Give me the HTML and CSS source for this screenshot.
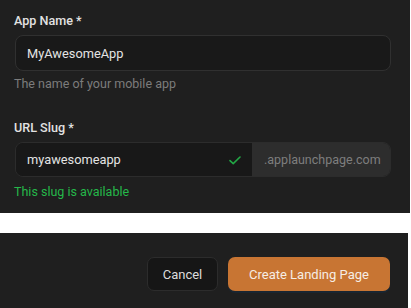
FILE: index.html
```html
<!DOCTYPE html>
<html>
<head>
<meta charset="utf-8">
<link rel="stylesheet" href="styles.css">
</head>
<body>
<div class="form">
  <div class="field">
    <label class="label">App Name *</label>
    <div class="input">MyAwesomeApp</div>
    <div class="hint">The name of your mobile app</div>
  </div>
  <div class="field slug-field">
    <label class="label">URL Slug *</label>
    <div class="slug">
      <div class="slug-input">
        <span>myawesomeapp</span>
        <svg class="check" width="12" height="9" viewBox="0 0 12 9"><path d="M1 4.6 L4.2 7.6 L11 1" fill="none" stroke="#22a745" stroke-width="1.6" stroke-linecap="round" stroke-linejoin="round"/></svg>
      </div>
      <div class="suffix">.applaunchpage.com</div>
    </div>
    <div class="ok">This slug is available</div>
  </div>
</div>
<div class="footer">
  <button class="btn cancel">Cancel</button>
  <button class="btn primary">Create Landing Page</button>
</div>
</body>
</html>
```
FILE: styles.css
```css
* { box-sizing: border-box; }
html, body { margin: 0; padding: 0; background: #ffffff; }
body { font-family: Roboto, "Noto Sans", sans-serif; width: 411px; height: 308px; overflow: hidden; }
.form {
  width: 410px;
  height: 213px;
  background: #1f1f1f;
  padding: 13px 19px 0 15px;
}
.field { display: flex; flex-direction: column; }
.label {
  font-size: 12.6px;
  line-height: 16px;
  font-weight: 500;
  color: #e2e2e2;
  margin-bottom: 6px;
  margin-left: -1px;
}
.input {
  height: 36px;
  border: 1px solid #303030;
  border-radius: 8px;
  background: #191919;
  color: #e4e4e4;
  font-size: 12.8px;
  display: flex;
  align-items: center;
  padding-left: 11px;
}
.hint {
  margin-top: 6px;
  font-size: 12.5px;
  line-height: 14px;
  color: #7c7c7c;
  margin-left: -1px;
}
.slug-field { margin-top: 29px; }
.slug {
  height: 35px;
  display: flex;
  border-radius: 8px;
  overflow: hidden;
  border: 1px solid #2c2c2c;
}
.slug-input {
  width: 236px;
  background: #181818;
  display: flex;
  align-items: center;
  justify-content: space-between;
  padding: 0 11px 0 11px;
  color: #e4e4e4;
  font-size: 12.8px;
}
.check { margin-top: 1px; }
.suffix {
  flex: 1;
  background: #2d2d2d;
  color: #7e7e7e;
  font-size: 12.5px;
  display: flex;
  align-items: center;
  padding-left: 12px;
}
.ok {
  margin-top: 8px;
  font-size: 12.5px;
  line-height: 14px;
  color: #25b84a;
  margin-left: -1px;
}
.footer {
  margin-top: 20px;
  width: 408px;
  height: 75px;
  background: #1f1f1f;
  display: flex;
  justify-content: flex-end;
  align-items: flex-start;
  gap: 10px;
  padding: 24px 18px 0 0;
}
.btn {
  font-family: Roboto, "Noto Sans", sans-serif;
  font-size: 13px;
  height: 34px;
  border-radius: 7px;
  cursor: pointer;
}
.cancel {
  width: 71px;
  background: #161616;
  border: 1px solid #2c2c2c;
  color: #dcdcdc;
}
.primary {
  width: 162px;
  background: #c87533;
  border: none;
  color: #f6ede4;
  font-weight: 400;
  box-shadow: 0 2px 0 #1a2530;
}
```
